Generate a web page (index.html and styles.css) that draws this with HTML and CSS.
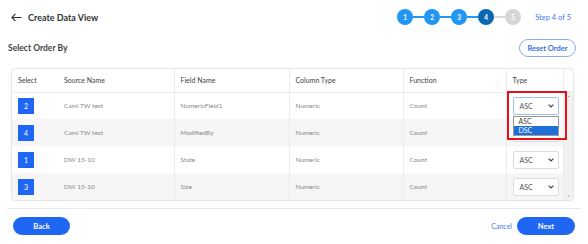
FILE: index.html
```html
<!DOCTYPE html>
<html lang="en">
<head>
  <meta charset="UTF-8" />
  <meta name="viewport" content="width=device-width, initial-scale=1.0"/>
  <title>Create Data View</title>
  <link rel="stylesheet" href="styles.css">
</head>
<body>
  <header class="topbar">
    <div class="title">
      <svg class="back-arrow" width="11" height="9" viewBox="0 0 11 9"><path d="M4.5 0.8 L0.9 4.5 L4.5 8.2 M1 4.5 H10.5" fill="none" stroke="#333" stroke-width="1.1"/></svg>
      <span>Create Data View</span>
    </div>
    <div class="progress">
      <ol class="stepper">
        <li class="step done">1</li>
        <li class="bar done"></li>
        <li class="step done">2</li>
        <li class="bar done"></li>
        <li class="step done">3</li>
        <li class="bar done"></li>
        <li class="step current">4</li>
        <li class="bar"></li>
        <li class="step">5</li>
      </ol>
      <span class="step-label">Step 4 of 5</span>
    </div>
  </header>

  <div class="section-head">
    <h2>Select Order By</h2>
    <button class="btn-outline">Reset Order</button>
  </div>

  <div class="card">
    <table class="grid">
      <colgroup>
        <col style="width:46px"><col style="width:116px"><col style="width:115px">
        <col style="width:114px"><col style="width:103px"><col style="width:57px">
      </colgroup>
      <thead>
        <tr>
          <th>Select</th>
          <th>Source Name</th>
          <th class="sep">Field Name</th>
          <th class="sep">Column Type</th>
          <th class="sep">Function</th>
          <th class="sep">Type</th>
        </tr>
      </thead>
      <tbody>
        <tr>
          <td><span class="badge">2</span></td>
          <td>Cami TW test</td>
          <td class="sep">NumericField1</td>
          <td class="sep">Numeric</td>
          <td class="sep">Count</td>
          <td class="sep">
            <div class="select-wrap">
              <div class="select focused">ASC<svg width="6" height="4" viewBox="0 0 6 4"><path d="M0.6 0.6 L3 3 L5.4 0.6" fill="none" stroke="#444" stroke-width="1.2"/></svg></div>
              <ul class="options">
                <li>ASC</li>
                <li class="active">DSC</li>
              </ul>
              <div class="highlight"></div>
            </div>
          </td>
        </tr>
        <tr class="alt">
          <td><span class="badge">4</span></td>
          <td>Cami TW test</td>
          <td class="sep">ModifiedBy</td>
          <td class="sep">Numeric</td>
          <td class="sep">Count</td>
          <td class="sep"><div class="select">ASC<svg width="6" height="4" viewBox="0 0 6 4"><path d="M0.6 0.6 L3 3 L5.4 0.6" fill="none" stroke="#444" stroke-width="1.2"/></svg></div></td>
        </tr>
        <tr>
          <td><span class="badge">1</span></td>
          <td>DW 15-10</td>
          <td class="sep">State</td>
          <td class="sep">Numeric</td>
          <td class="sep">Count</td>
          <td class="sep"><div class="select">ASC<svg width="6" height="4" viewBox="0 0 6 4"><path d="M0.6 0.6 L3 3 L5.4 0.6" fill="none" stroke="#444" stroke-width="1.2"/></svg></div></td>
        </tr>
        <tr class="alt">
          <td><span class="badge">3</span></td>
          <td>DW 15-10</td>
          <td class="sep">Size</td>
          <td class="sep">Numeric</td>
          <td class="sep">Count</td>
          <td class="sep"><div class="select">ASC<svg width="6" height="4" viewBox="0 0 6 4"><path d="M0.6 0.6 L3 3 L5.4 0.6" fill="none" stroke="#444" stroke-width="1.2"/></svg></div></td>
        </tr>
      </tbody>
    </table>
    <div class="scrollbar">
      <div class="scroll-head"></div>
      <div class="scroll-track">
        <span>&#9650;</span>
        <span>&#9660;</span>
      </div>
    </div>
  </div>

  <footer class="footer">
    <button class="btn-primary">Back</button>
    <div class="footer-right">
      <a class="link" href="#">Cancel</a>
      <button class="btn-primary">Next</button>
    </div>
  </footer>
</body>
</html>
```

FILE: styles.css
```css
* { box-sizing: border-box; margin: 0; padding: 0; }
body {
  background: #fff;
  font-family: 'Lato', 'Noto Sans', sans-serif;
  color: #333;
  width: 588px;
}
.topbar {
  height: 34px;
  display: flex; align-items: center; justify-content: space-between;
  padding: 0 17px 0 11px;
}
.title { display: flex; align-items: center; gap: 6px; font-size: 9px; font-weight: 700; color: #333; }
.back-arrow { display: block; }
.progress { display: flex; align-items: center; gap: 14px; }
.stepper { list-style: none; display: flex; align-items: center; }
.step {
  width: 16px; height: 16px; border-radius: 50%;
  background: #d6d6d6; color: #fff;
  font-size: 6.5px; font-weight: 700;
  display: flex; align-items: center; justify-content: center;
}
.step.done { background: #2196f3; }
.step.current { background: #0b67b0; }
.bar { width: 11px; height: 2px; background: #dadada; }
.bar.done { background: #2196f3; }
.step-label { font-size: 7.5px; color: #3f7be6; }

.section-head {
  height: 28px;
  display: flex; align-items: center; justify-content: space-between;
  padding: 0 12px 0 8px;
}
.section-head h2 { font-size: 8.5px; font-weight: 700; color: #444; }
.btn-outline {
  width: 57px; height: 18px;
  border: 1px solid #8aaef2; border-radius: 9px;
  background: #fff; color: #3b6fe0;
  font: 700 7.5px 'Lato', sans-serif;
}

.card {
  position: relative;
  display: flex;
  height: 133px;
  margin: 6px 14px 0 11px;
  border: 1px solid #e6e6e6; border-radius: 4px;
  box-shadow: 0 0 2px rgba(0,0,0,0.05);
}
.grid {
  width: 551px;
  border-collapse: collapse;
  table-layout: fixed;
  font-size: 7px;
}
.grid th {
  height: 23px;
  text-align: left; font-weight: 400; font-size: 7px; color: #444;
  padding: 0 6px;
  border-bottom: 1px solid #ececec;
}
.grid td {
  height: 27px;
  padding: 0 6px;
  color: #888; font-size: 6.5px;
}
.grid .sep { border-left: 1px solid #ececec; }
.grid tr.alt td { background: #f6f6f6; }
.badge {
  display: flex; align-items: center; justify-content: center;
  width: 16px; height: 16px;
  background: #1f66f2; color: #fff;
  font-size: 7px;
}
.select-wrap { position: relative; }
.select {
  width: 46px; height: 18px;
  display: flex; align-items: center; justify-content: space-between;
  padding: 0 4px 0 6px;
  background: #fff;
  border: 1px solid #dcdcdc; border-radius: 2px;
  color: #555; font-size: 7px;
}
.select.focused { border-color: #9cc2ef; }
.select svg { display: block; }
.options {
  position: absolute; top: 19px; left: 0;
  width: 46px;
  list-style: none;
  background: #fff;
  border: 1px solid #9a9a9a;
  font-size: 7px; color: #444;
  z-index: 2;
}
.options li { height: 9px; line-height: 9px; padding-left: 5px; }
.options li.active { background: #1f6fd6; color: #fff; }
.highlight {
  position: absolute; top: -6px; left: -6px;
  width: 60px; height: 49px;
  border: 2px solid #e8101a;
  z-index: 3;
}
.scrollbar { flex: 1; display: flex; flex-direction: column; border-left: 1px solid #ececec; }
.scroll-head { height: 23px; border-bottom: 1px solid #ececec; }
.scroll-track {
  flex: 1; background: #f1f1f1;
  display: flex; flex-direction: column; justify-content: space-between; align-items: center;
  font-size: 3px; color: #999; padding: 2px 0;
}

.footer {
  margin: 7px 7px 0 7px;
  border-top: 1px solid #e4eaf3;
  padding: 8px 6px 0 6px;
  display: flex; justify-content: space-between; align-items: center;
}
.footer-right { display: flex; align-items: center; gap: 5px; }
.btn-primary {
  width: 57px; height: 18px;
  border: none; border-radius: 9px;
  background: #1f66f2; color: #fff;
  font: 700 7.5px 'Lato', sans-serif;
}
.btn-primary:last-child { width: 58px; }
.link { color: #4a7ce8; font-size: 7px; text-decoration: none; }
```
